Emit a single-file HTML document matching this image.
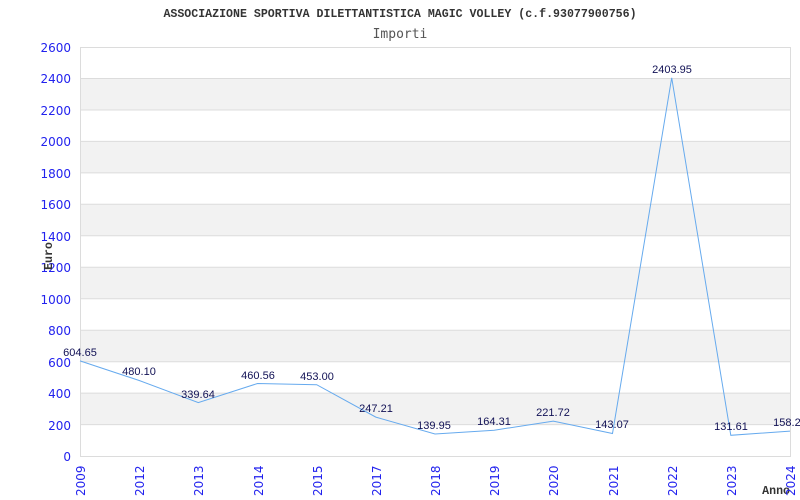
<!DOCTYPE html>
<html><head><style>body{margin:0;background:#fff}svg{display:block}</style></head><body>
<svg width="800" height="500" xmlns="http://www.w3.org/2000/svg">
<rect width="800" height="500" fill="#fff"/>
<g fill="#f2f2f2">
<rect x="80" y="78.5" width="710" height="31.5"/>
<rect x="80" y="141.4" width="710" height="31.5"/>
<rect x="80" y="204.3" width="710" height="31.5"/>
<rect x="80" y="267.3" width="710" height="31.5"/>
<rect x="80" y="330.2" width="710" height="31.5"/>
<rect x="80" y="393.1" width="710" height="31.5"/>
</g>
<g stroke="#dcdcdc" stroke-width="1">
<line x1="80" y1="47.5" x2="790" y2="47.5"/><line x1="80" y1="78.5" x2="790" y2="78.5"/><line x1="80" y1="110" x2="790" y2="110"/><line x1="80" y1="141.4" x2="790" y2="141.4"/><line x1="80" y1="172.9" x2="790" y2="172.9"/><line x1="80" y1="204.3" x2="790" y2="204.3"/><line x1="80" y1="235.8" x2="790" y2="235.8"/><line x1="80" y1="267.3" x2="790" y2="267.3"/><line x1="80" y1="298.7" x2="790" y2="298.7"/><line x1="80" y1="330.2" x2="790" y2="330.2"/><line x1="80" y1="361.7" x2="790" y2="361.7"/><line x1="80" y1="393.1" x2="790" y2="393.1"/><line x1="80" y1="424.6" x2="790" y2="424.6"/><line x1="80" y1="456.5" x2="790" y2="456.5"/>
<line x1="80.5" y1="47" x2="80.5" y2="457"/><line x1="790.5" y1="47" x2="790.5" y2="457"/>
</g>
<text x="400" y="17" text-anchor="middle" font-family="Liberation Mono, monospace" font-size="11.6" font-weight="bold" fill="#333">ASSOCIAZIONE SPORTIVA DILETTANTISTICA MAGIC VOLLEY (c.f.93077900756)</text>
<text x="400" y="38" text-anchor="middle" font-family="DejaVu Sans Mono, monospace" font-size="13" fill="#555">Importi</text>
<g font-family="DejaVu Sans, sans-serif" font-size="12" fill="#2222ee" text-anchor="end">
<text x="71" y="52">2600</text><text x="71" y="83">2400</text><text x="71" y="115">2200</text><text x="71" y="146">2000</text><text x="71" y="178">1800</text><text x="71" y="209">1600</text><text x="71" y="241">1400</text><text x="71" y="272">1200</text><text x="71" y="304">1000</text><text x="71" y="335">800</text><text x="71" y="367">600</text><text x="71" y="398">400</text><text x="71" y="430">200</text><text x="71" y="461">0</text>
</g>
<text transform="translate(52,256) rotate(-90)" text-anchor="middle" font-family="Liberation Mono, monospace" font-size="11.6" font-weight="bold" fill="#333">Euro</text>
<text x="790" y="494" text-anchor="end" font-family="Liberation Mono, monospace" font-size="11.6" font-weight="bold" fill="#333">Anno</text>
<g font-family="DejaVu Sans, sans-serif" font-size="12" fill="#2222ee">
<text transform="translate(85,496) rotate(-90)">2009</text>
<text transform="translate(144,496) rotate(-90)">2012</text>
<text transform="translate(203,496) rotate(-90)">2013</text>
<text transform="translate(263,496) rotate(-90)">2014</text>
<text transform="translate(322,496) rotate(-90)">2015</text>
<text transform="translate(381,496) rotate(-90)">2017</text>
<text transform="translate(440,496) rotate(-90)">2018</text>
<text transform="translate(499,496) rotate(-90)">2019</text>
<text transform="translate(558,496) rotate(-90)">2020</text>
<text transform="translate(618,496) rotate(-90)">2021</text>
<text transform="translate(677,496) rotate(-90)">2022</text>
<text transform="translate(736,496) rotate(-90)">2023</text>
<text transform="translate(795,496) rotate(-90)">2024</text>
</g>
<polyline fill="none" stroke="#66aaee" stroke-width="1" points="80,360.9 139.2,380.5 198.3,402.6 257.5,383.5 316.7,384.7 375.8,417.1 435,434 494.2,430.2 553.3,421.1 612.5,433.5 671.7,77.8 730.8,435.3 790,431.1"/>
<g font-family="Liberation Sans, sans-serif" font-size="11" fill="#111155" text-anchor="middle">
<text x="80" y="356">604.65</text>
<text x="139" y="375">480.10</text>
<text x="198" y="398">339.64</text>
<text x="258" y="379">460.56</text>
<text x="317" y="380">453.00</text>
<text x="376" y="412">247.21</text>
<text x="434" y="429">139.95</text>
<text x="494" y="425">164.31</text>
<text x="553" y="416">221.72</text>
<text x="612" y="428">143.07</text>
<text x="672" y="73">2403.95</text>
<text x="731" y="430">131.61</text>
<text x="790" y="426">158.25</text>
</g>
</svg>
</body></html>
